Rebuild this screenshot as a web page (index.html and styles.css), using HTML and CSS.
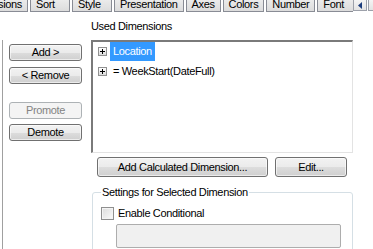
FILE: index.html
```html
<!DOCTYPE html>
<html lang="en">
<head>
    <meta charset="UTF-8">
    <title>Dimensions</title>
    <link rel="stylesheet" href="styles.css">
</head>
<body>
    <div class="tabs">
        <div class="tab-strip">
            <div class="tab tab-first">Dimensions</div>
            <div class="tab">Sort</div>
            <div class="tab">Style</div>
            <div class="tab">Presentation</div>
            <div class="tab tab-narrow">Axes</div>
            <div class="tab">Colors</div>
            <div class="tab">Number</div>
            <div class="tab">Font</div>
        </div>
        <div class="tab-scroll">
            <svg width="5" height="7" viewBox="0 0 5 7"><path d="M4 0 L0 3.5 L4 7 Z" fill="#1c3c7c"/></svg>
        </div>
        <div class="tab-scroll"></div>
    </div>

    <div class="main">
        <div class="available-list"></div>

        <div class="move-buttons">
            <button class="btn">Add &gt;</button>
            <button class="btn">&lt; Remove</button>
            <button class="btn btn-promote" disabled>Promote</button>
            <button class="btn">Demote</button>
        </div>

        <div class="used-panel">
            <div class="panel-label">Used Dimensions</div>
            <div class="tree">
                <div class="tree-row">
                    <span class="expander">
                        <svg width="9" height="9" viewBox="0 0 9 9"><path d="M2 4.5 H7 M4.5 2 V7" stroke="#000" stroke-width="1"/></svg>
                    </span>
                    <span class="tree-text selected">Location</span>
                </div>
                <div class="tree-row">
                    <span class="expander">
                        <svg width="9" height="9" viewBox="0 0 9 9"><path d="M2 4.5 H7 M4.5 2 V7" stroke="#000" stroke-width="1"/></svg>
                    </span>
                    <span class="tree-text">= WeekStart(DateFull)</span>
                </div>
            </div>

            <div class="panel-buttons">
                <button class="btn btn-calc">Add Calculated Dimension...</button>
                <button class="btn btn-edit">Edit...</button>
            </div>

            <fieldset class="group">
                <legend>Settings for Selected Dimension</legend>
                <label class="check-row">
                    <span class="checkbox"></span>
                    Enable Conditional
                </label>
                <div class="cond-input"></div>
            </fieldset>
        </div>
    </div>
</body>
</html>
```

FILE: styles.css
```css
* {
    box-sizing: border-box;
    margin: 0;
    padding: 0;
}

body {
    font-family: "Liberation Sans", Arial, sans-serif;
    font-size: 11px;
    line-height: 13px;
    letter-spacing: -0.35px;
    color: #000;
    background-color: #fff;
    width: 373px;
    height: 249px;
    overflow: hidden;
}

.tabs {
    display: flex;
    height: 12px;
    overflow: hidden;
    background-color: #fff;
}

.tab-strip {
    display: flex;
    width: 353px;
    overflow: hidden;
    flex: none;
}

.tab {
    flex: none;
    min-width: 40px;
    margin-top: -5px;
    height: 17px;
    padding: 3px 5px 0;
    margin-right: 2px;
    border: 1px solid #898c95;
    border-top: none;
    background: linear-gradient(#f2f2f2, #dcdcdc);
}

.tab-first {
    margin-left: -38px;
}

.tab-narrow {
    min-width: 35px;
}

.tab-scroll {
    flex: none;
    width: 14px;
    height: 11px;
    margin-right: 1px;
    border: 1px solid #9da1aa;
    border-top: none;
    background: linear-gradient(#f4f4f4, #e3e3e3);
    display: flex;
    align-items: center;
    justify-content: center;
}

.main {
    display: flex;
}

.available-list {
    width: 3px;
    height: 209px;
    margin-top: 28px;
    border-right: 1px solid #a0a0a0;
}

.move-buttons {
    width: 73px;
    margin-left: 6px;
    padding-top: 32px;
    display: flex;
    flex-direction: column;
}

.btn {
    font-family: inherit;
    font-size: 11px;
    line-height: 13px;
    letter-spacing: -0.35px;
    height: 17px;
    color: #000;
    border: 1px solid #707070;
    border-radius: 3px;
    background: linear-gradient(#f2f2f2 0%, #ebebeb 50%, #dddddd 51%, #cfcfcf 100%);
    box-shadow: inset 0 0 0 1px rgba(255, 255, 255, 0.6);
}

.move-buttons .btn {
    margin-bottom: 6px;
}

.move-buttons .btn-promote {
    margin-top: 12px;
    margin-bottom: 5px;
}

.btn:disabled {
    color: #838383;
    border-color: #adb2b5;
    background: #f4f4f4;
    box-shadow: none;
}

.used-panel {
    width: 262px;
    margin-left: 9px;
}

.panel-label {
    padding-top: 8px;
    height: 28px;
}

.tree {
    height: 113px;
    border-top: 2px solid #7a7a7a;
    border-left: 2px solid #7a7a7a;
    border-right: 1px solid #e3e3e3;
    border-bottom: 1px solid #e3e3e3;
}

.tree-row {
    display: flex;
    align-items: center;
    height: 19px;
    margin-bottom: 1px;
}

.expander {
    width: 9px;
    height: 9px;
    margin-left: 5px;
    border: 1px solid #919191;
    background: linear-gradient(#ffffff, #dcdcdc);
    display: flex;
}

.expander svg {
    margin: -1px;
}

.tree-text {
    margin-left: 3px;
    padding: 0 3px;
    height: 19px;
    line-height: 19px;
}

.tree-text.selected {
    background-color: #3399ff;
    color: #fff;
}

.panel-buttons {
    display: flex;
    gap: 7px;
    padding: 4px 0 0 6px;
}

.btn-calc {
    width: 171px;
    height: 20px;
}

.btn-edit {
    width: 72px;
    height: 20px;
}

.group {
    margin: 9px 0 0 1px;
    height: 70px;
    border: 1px solid #d5dfe5;
    border-radius: 3px;
    padding: 6px 8px 0;
}

.group legend {
    padding: 0 1px;
}

.check-row {
    display: flex;
    align-items: center;
    gap: 4px;
    height: 16px;
}

.checkbox {
    width: 13px;
    height: 13px;
    border: 1px solid #8f8f8f;
    background: linear-gradient(135deg, #dcdcdc, #fbfbfb);
    box-shadow: inset 0 0 0 1px #f4f4f4;
}

.cond-input {
    margin: 3px 0 0 15px;
    width: 225px;
    height: 24px;
    border: 1px solid #adadad;
    border-radius: 2px;
    background-color: #f0f0f0;
}
```
